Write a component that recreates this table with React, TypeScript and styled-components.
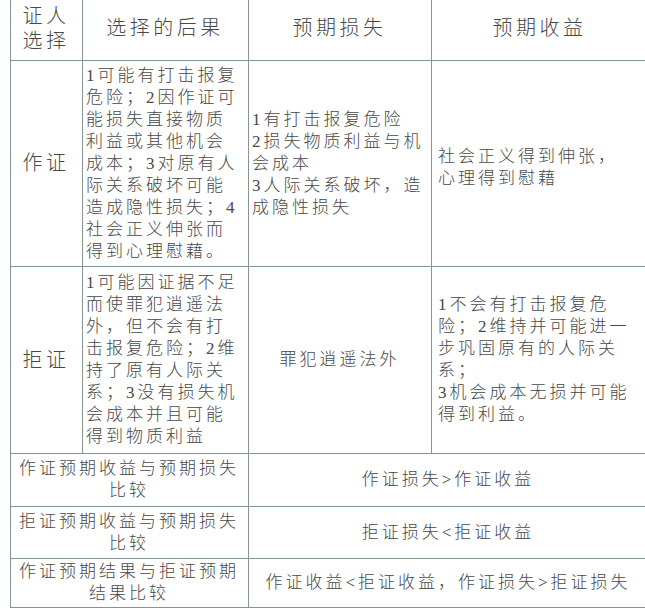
import styled, { createGlobalStyle } from 'styled-components';

const GlobalStyle = createGlobalStyle`
  html, body {
    margin: 0;
    padding: 0;
    background: #fff;
    overflow: hidden;
  }
  body {
    width: 645px;
    height: 615px;
  }
`;

const Table = styled.table`
  margin: -4px 0 0 10px;
  width: 638px;
  border-collapse: collapse;
  table-layout: fixed;
  font-family: "Liberation Serif", "Noto Sans CJK SC", serif;
  font-weight: 300;
  color: #484848;
`;

const Row = styled.tr<{ $h: number }>`
  height: ${p => p.$h}px;
`;

type CellProps = {
  $align?: 'left' | 'center';
  $head?: boolean;
  $padTop?: number;
  $padRight?: number;
};

const Cell = styled.td<CellProps>`
  border: 1px solid #869494;
  padding: ${p => p.$padTop ?? 0}px ${p => p.$padRight ?? 4}px 0 3px;
  vertical-align: middle;
  text-align: ${p => p.$align ?? 'left'};
  font-size: ${p => (p.$head ? '20px' : '17px')};
  letter-spacing: ${p => (p.$head ? '3.5px' : '3px')};
  line-height: ${p => (p.$head ? '25px' : '22px')};
`;

const WideCell = styled(Cell)`
  padding-left: 6px;
`;

const Line = styled.div``;

export default function App() {
  return (
    <>
      <GlobalStyle />
      <Table>
        <colgroup>
          <col style={{ width: 72 }} />
          <col style={{ width: 166 }} />
          <col style={{ width: 183 }} />
          <col style={{ width: 217 }} />
        </colgroup>
        <tbody>
          <Row $h={64}>
            <Cell $head $align="center">证人选择</Cell>
            <Cell $head $align="center">选择的后果</Cell>
            <Cell $head $align="center">预期损失</Cell>
            <Cell $head $align="center">预期收益</Cell>
          </Row>
          <Row $h={206}>
            <Cell $head $align="center">作证</Cell>
            <Cell>
              1可能有打击报复危险；2因作证可能损失直接物质利益或其他机会成本；3对原有人际关系破坏可能造成隐性损失；4社会正义伸张而得到心理慰藉。
            </Cell>
            <Cell>
              <Line>1有打击报复危险</Line>
              <Line>2损失物质利益与机会成本</Line>
              <Line>3人际关系破坏，造成隐性损失</Line>
            </Cell>
            <WideCell $padTop={8} $padRight={15}>
              社会正义得到伸张，心理得到慰藉
            </WideCell>
          </Row>
          <Row $h={187}>
            <Cell $head $align="center">拒证</Cell>
            <Cell>
              1可能因证据不足而使罪犯逍遥法外，但不会有打击报复危险；2维持了原有人际关系；3没有损失机会成本并且可能得到物质利益
            </Cell>
            <Cell $align="center">罪犯逍遥法外</Cell>
            <WideCell $padRight={15}>
              <Line>1不会有打击报复危险；2维持并可能进一步巩固原有的人际关系；</Line>
              <Line>3机会成本无损并可能得到利益。</Line>
            </WideCell>
          </Row>
          <Row $h={53}>
            <Cell colSpan={2} $align="center">作证预期收益与预期损失比较</Cell>
            <Cell colSpan={2} $align="center">作证损失&gt;作证收益</Cell>
          </Row>
          <Row $h={52}>
            <Cell colSpan={2} $align="center">拒证预期收益与预期损失比较</Cell>
            <Cell colSpan={2} $align="center">拒证损失&lt;拒证收益</Cell>
          </Row>
          <Row $h={49}>
            <Cell colSpan={2} $align="center">作证预期结果与拒证预期结果比较</Cell>
            <Cell colSpan={2} $align="center">作证收益&lt;拒证收益，作证损失&gt;拒证损失</Cell>
          </Row>
        </tbody>
      </Table>
    </>
  );
}
